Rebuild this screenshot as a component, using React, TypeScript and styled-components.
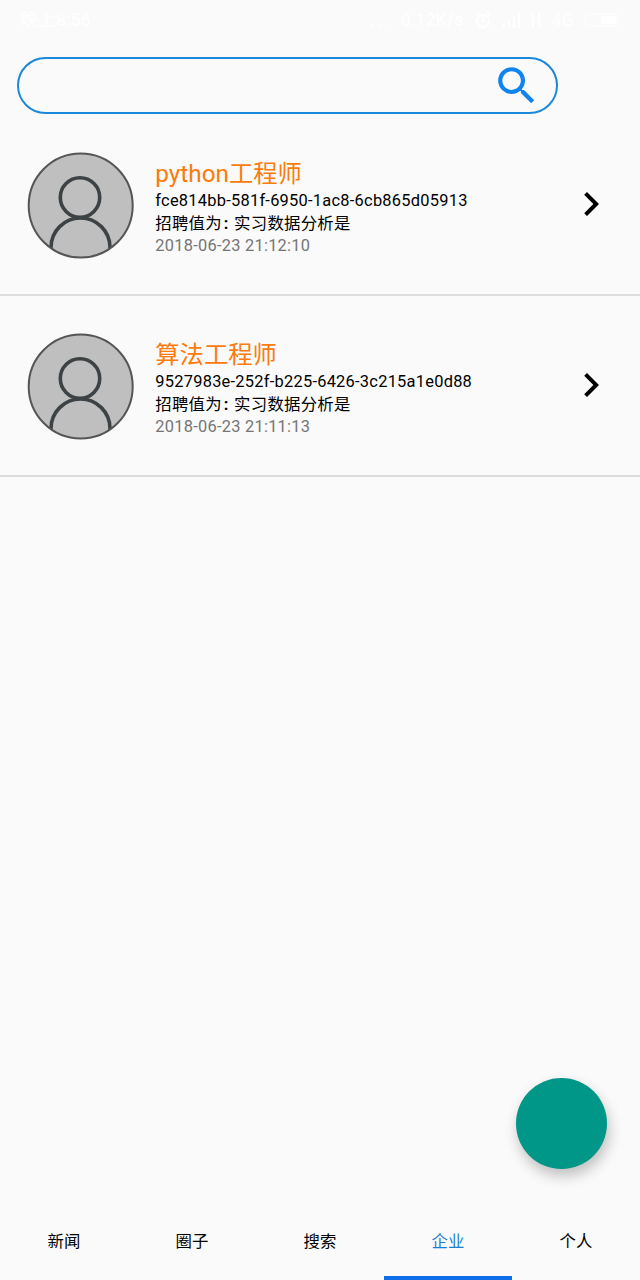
import React from "react";
import styled, { createGlobalStyle } from "styled-components";

const GlobalStyle = createGlobalStyle`
  * { box-sizing: border-box; }
  body {
    margin: 0;
    background: #fafafa;
    font-family: Roboto, "Noto Sans CJK SC", sans-serif;
    color: #000;
  }
`;

const Screen = styled.div`
  position: relative;
  display: flex;
  flex-direction: column;
  width: 640px;
  height: 1280px;
  overflow: hidden;
  background: #fafafa;
`;

const StatusBar = styled.header`
  display: flex;
  justify-content: space-between;
  align-items: center;
  height: 40px;
  padding: 0 20px;
  color: #fff;
  font-size: 18px;
  line-height: 24px;
`;

const StatusGroup = styled.div`
  display: flex;
  align-items: center;
  gap: 10px;
`;

const Dots = styled.span`
  letter-spacing: 2px;
`;

const SearchBox = styled.div`
  display: flex;
  justify-content: flex-end;
  align-items: center;
  flex: none;
  width: 541px;
  height: 57px;
  margin: 17px 0 0 17px;
  padding: 1px 15px 0 0;
  border: 2px solid #1b88da;
  border-radius: 29px;
`;

const List = styled.main`
  flex: 1;
  margin-top: 1px;
`;

const Row = styled.article`
  display: flex;
  height: 181px;
  padding: 37px 24px 0 27px;
  border-bottom: 2px solid #dcdcdc;
`;

const Details = styled.div`
  flex: 1;
  padding: 5px 0 0 21.3px;
  font-size: 16.4px;
  line-height: 22.5px;
  letter-spacing: 0.26px;
  white-space: nowrap;
`;

const Title = styled.h2`
  margin: 0;
  font-size: 24.3px;
  font-weight: 400;
  line-height: 33px;
  letter-spacing: 0;
  color: #fb7b0c;
`;

const Line = styled.div``;

const Colon = styled.span`
  margin: 0 1.2px 0 1.8px;
  font-weight: 700;
`;

const Time = styled.div`
  color: #757575;
`;

const ChevronBox = styled.div`
  width: 48px;
  padding-top: 28px;
  margin-right: 1px;
`;

const Fab = styled.button`
  position: absolute;
  right: 32.7px;
  bottom: 110.8px;
  width: 91.4px;
  height: 91.4px;
  padding: 0;
  border: 0;
  border-radius: 50%;
  background: #009688;
  box-shadow: 2px 7px 14px rgba(0, 0, 0, 0.24);
`;

const Tabs = styled.nav`
  display: grid;
  grid-template-columns: repeat(5, 1fr);
  height: 78px;
`;

const Tab = styled.div<{ $active?: boolean }>`
  display: flex;
  justify-content: center;
  align-items: center;
  padding-top: ${(p) => (p.$active ? 6 : 2)}px;
  border-bottom: ${(p) => (p.$active ? "4px solid #0f6fe8" : "0")};
  color: ${(p) => (p.$active ? "#1c7fd2" : "#000")};
  font-size: 16.4px;
  line-height: 24px;
`;

const Avatar = ({ id }: { id: string }) => (
  <svg width="107" height="107" viewBox="0 0 107 107" fill="none">
    <clipPath id={id}>
      <circle cx="53.7" cy="53.5" r="52.5" />
    </clipPath>
    <circle cx="53.7" cy="53.5" r="52" fill="#bfbfbf" />
    <g clipPath={`url(#${id})`} stroke="#3d4245" strokeWidth="3.6">
      <circle cx="53" cy="45.5" r="19.7" />
      <path d="M24 100V95.5a29.5 29.5 0 0 1 59 0V100" />
    </g>
    <circle cx="53.7" cy="53.5" r="52" stroke="#555" strokeWidth="2" />
  </svg>
);

const SearchIcon = () => (
  <svg width="49.5" height="49.5" viewBox="0 0 24 24" fill="#0f84f0">
    <path d="M15.5 14h-.79l-.28-.27A6.47 6.47 0 0 0 16 9.5 6.5 6.5 0 1 0 9.5 16c1.61 0 3.09-.59 4.23-1.57l.27.28v.79l5 4.99L20.49 19l-4.99-5zm-6 0C7.01 14 5 11.99 5 9.5S7.01 5 9.5 5 14 7.01 14 9.5 11.99 14 9.5 14z" />
  </svg>
);

const Chevron = () => (
  <svg width="48" height="48" viewBox="0 0 24 24">
    <path d="M10 6L8.59 7.41 13.17 12l-4.58 4.59L10 18l6-6z" />
  </svg>
);

const StatusIcon = ({ children, width = 18 }: { children: React.ReactNode; width?: number }) => (
  <svg width={width} height="18" viewBox={`0 0 ${width} 18`} fill="none" stroke="#fff" strokeWidth="2">
    {children}
  </svg>
);

const jobs = [
  { title: "python工程师", id: "fce814bb-581f-6950-1ac8-6cb865d05913", time: "2018-06-23 21:12:10" },
  { title: "算法工程师", id: "9527983e-252f-b225-6426-3c215a1e0d88", time: "2018-06-23 21:11:13" },
];

const tabs = ["新闻", "圈子", "搜索", "企业", "个人"];

export default function App() {
  return (
    <Screen>
      <GlobalStyle />
      <StatusBar>
        <span>晚上8:56</span>
        <StatusGroup>
          <Dots>...</Dots>
          <span>0.12K/s</span>
          <StatusIcon>
            <circle cx="9" cy="10" r="6" />
            <path d="M9 6v4h3M2 4l3-3M16 4l-3-3" />
          </StatusIcon>
          <StatusIcon>
            <path d="M2 17v-4M7 17v-7M12 17V6M17 17V2" />
          </StatusIcon>
          <StatusIcon width={12}>
            <path d="M3 16V3L0 6M9 2v13l3-3" />
          </StatusIcon>
          <span>4G</span>
          <StatusIcon width={36}>
            <rect x="1" y="3" width="32" height="12" rx="2" strokeWidth="1" />
            <path d="M18 6h13v6H18z" fill="#fff" />
          </StatusIcon>
        </StatusGroup>
      </StatusBar>
      <SearchBox>
        <SearchIcon />
      </SearchBox>
      <List>
        {jobs.map((job, i) => (
          <Row key={job.id}>
            <Avatar id={`avatar-${i}`} />
            <Details>
              <Title>{job.title}</Title>
              <Line>{job.id}</Line>
              <Line>
                招聘值为<Colon>:</Colon> 实习数据分析是
              </Line>
              <Time>{job.time}</Time>
            </Details>
            <ChevronBox>
              <Chevron />
            </ChevronBox>
          </Row>
        ))}
      </List>
      <Tabs>
        {tabs.map((name) => (
          <Tab key={name} $active={name === "企业"}>
            {name}
          </Tab>
        ))}
      </Tabs>
      <Fab aria-label="add" />
    </Screen>
  );
}
